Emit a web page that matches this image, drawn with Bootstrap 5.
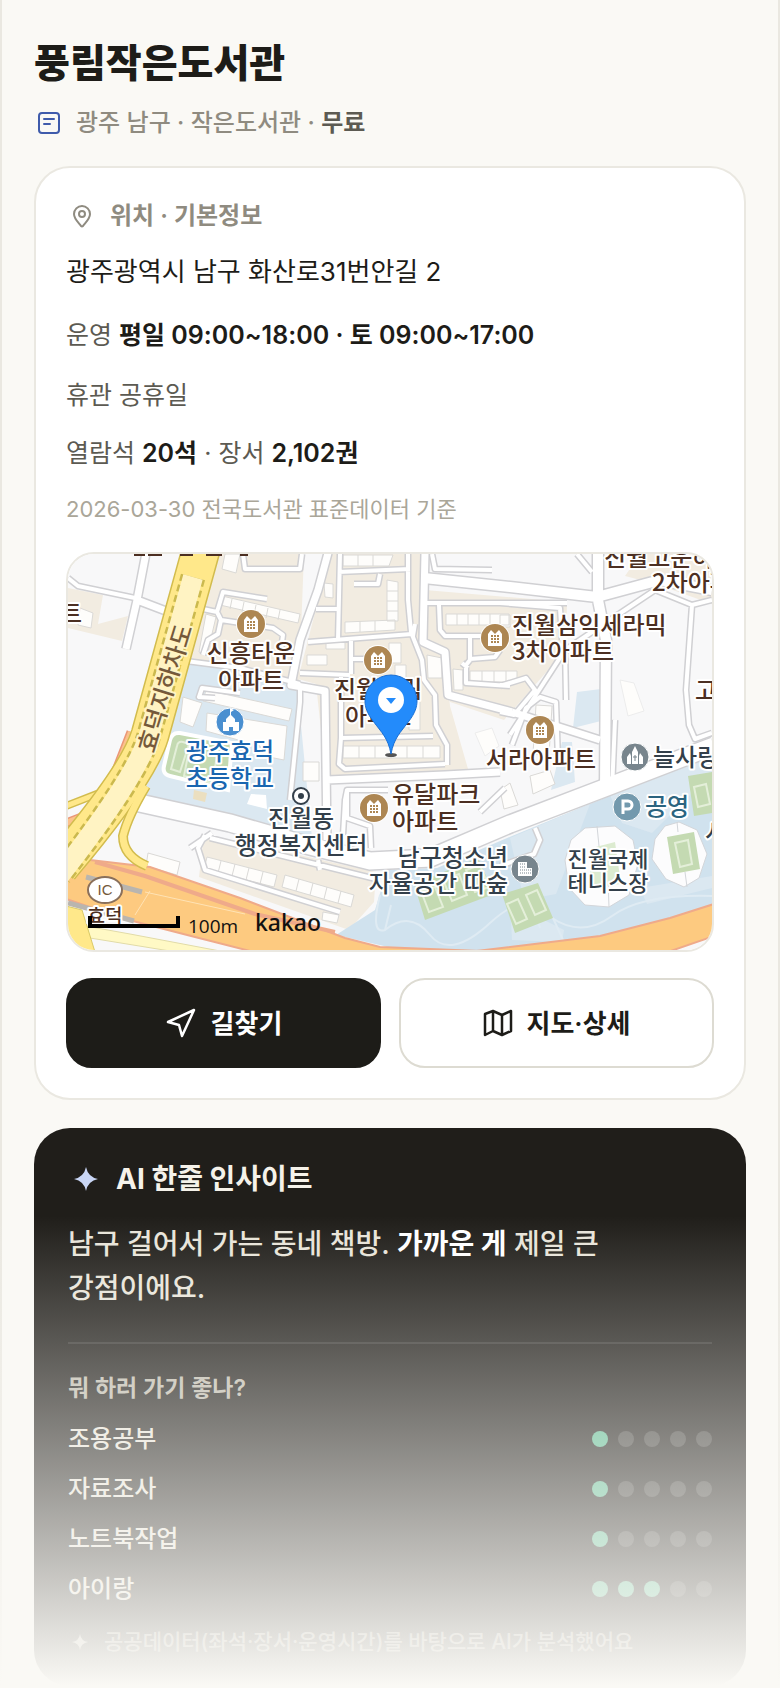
<!DOCTYPE html>
<html lang="ko">
<head>
<meta charset="utf-8">
<meta name="viewport" content="width=device-width, initial-scale=1">
<title>풍림작은도서관</title>
<link rel="stylesheet" href="https://cdn.jsdelivr.net/npm/bootstrap@5.3.0/dist/css/bootstrap.min.css">
<style>
  :root { --ink: #1d1c18; --paper: #faf9f5; --line: #eae8e1; --soft: #8f8b80; --mid: #5c5a52; }
  body { background: var(--paper); color: var(--ink); font-family: Inter, "Noto Sans CJK KR", sans-serif; font-size: 24px; line-height: 32px; }
  .shell { border: 2px solid var(--line); border-width: 0 2px; padding: 38px 32px 0; }
  .page-title { font-size: 39px; line-height: 50px; font-weight: 800; }
  .meta { color: var(--soft); font-size: 24px; line-height: 34px; font-weight: 500; margin-top: 18px; }
  .meta b { color: var(--mid); font-weight: 600; }
  .panel { border: 2px solid var(--line); border-radius: 36px; background: #fff; padding: 30px; margin-top: 26px; }
  .panel-head { color: var(--soft); font-weight: 600; line-height: 36px; }
  .facts { color: var(--mid); font-size: 25px; line-height: 34px; margin-top: 26px; }
  .facts b { color: var(--ink); font-weight: 600; }
  .address { color: var(--ink); font-size: 26px; font-weight: 400; line-height: 36px; margin: 20px 0 28px; }
  .source { color: #aaa699; font-size: 22px; line-height: 30px; margin: 24px 0 28px; }
  .map-box { border: 2px solid var(--line); border-radius: 28px; overflow: hidden; }
  .map-box svg { display: block; width: 100%; height: auto; }
  .actions { gap: 18px; margin-top: 26px; }
  .actions .btn { height: 90px; border-radius: 26px; border-width: 2px; font-size: 26px; font-weight: 600; gap: 14px; }
  .btn-go, .btn-go:hover { background: var(--ink); border-color: var(--ink); color: #fff; }
  .btn-map, .btn-map:hover { background: #fff; border-color: #dddbd2; color: var(--ink); }
  .insight { background: #201e1a; color: #e8e4d9; border-radius: 36px; padding: 34px 34px 28px; margin-top: 28px; }
  .insight h2 { color: #f5f2ea; font-size: 28px; line-height: 34px; font-weight: 700; }
  .insight .summary { font-size: 28px; line-height: 44px; font-weight: 500; margin-top: 26px; }
  .insight .summary b { color: #fff; font-weight: 700; }
  .insight hr { border-top: 2px solid #fff; opacity: .1; margin: 32px 0 28px; }
  .ask { font-size: 23px; line-height: 32px; font-weight: 600; color: #bdb9ac; margin-bottom: 10px; }
  .score { height: 50px; font-weight: 500; }
  .dots { gap: 10px; }
  .dots i { width: 16px; height: 16px; border-radius: 50%; background: rgba(255,255,255,.16); }
  .dots i.on { background: #5cba91; }
  .foot { font-size: 21px; line-height: 32px; font-weight: 500; color: #96938a; margin-top: 12px; }
  .fade-out { left: 0; right: 0; bottom: 0; height: 470px; background: linear-gradient(rgba(250,249,245,0), #faf9f5); pointer-events: none; }
  .stroke-icon { fill: none; stroke: currentColor; stroke-width: 2; stroke-linecap: round; stroke-linejoin: round; flex: none; }
  .btn .stroke-icon { stroke-width: 2.5; }
  .map-text { font-family: "Noto Sans CJK KR", sans-serif; font-size: 24px; font-weight: 500; fill: #4c2f22; stroke: #fff; stroke-width: 4; stroke-linejoin: round; paint-order: stroke; }
  .map-text .civic { fill: #333f4a; }
  .map-text .school { fill: #1a66b0; }
  .map-text .park { fill: #2b6480; }
  .map-text .tennis { fill: #333f4a; font-size: 22px; }
  .map-text .exit { font-size: 19px; }
  .map-text .tunnel { fill: #75593a; stroke: #fff3c3; }
</style>
</head>
<body>
<div class="position-relative">
<main class="shell">
  <header>
    <h1 class="page-title mb-0">풍림작은도서관</h1>
    <div class="meta d-flex align-items-center ps-1">
      <svg class="stroke-icon me-3" width="22" height="22" viewBox="0 0 22 22" style="color:#3f5bab"><rect x="1" y="1" width="20" height="20" rx="3"/><path d="M6 7h10M6 12h6"/></svg>
      <span>광주 남구 · 작은도서관 · <b>무료</b></span>
    </div>
  </header>

  <section class="panel">
    <div class="panel-head d-flex align-items-center">
      <svg class="stroke-icon ms-1 me-3" width="24" height="26" viewBox="0 0 24 26"><path d="M20 11c0 5-5 9-7 12q-1 1-2 0C9 20 4 16 4 11a8 8 0 0 1 16 0z"/><circle cx="12" cy="11" r="3"/></svg>
      <span>위치 · 기본정보</span>
    </div>
    <div class="address">광주광역시 남구 화산로31번안길 2</div>
    <div class="facts">운영 <b>평일 09:00~18:00 · 토 09:00~17:00</b></div>
    <div class="facts">휴관 공휴일</div>
    <div class="facts mt-4">열람석 <b>20석</b> · 장서 <b>2,102권</b></div>
    <div class="source">2026-03-30 전국도서관 표준데이터 기준</div>

    <div class="map-box">
    <svg viewBox="68 554 644 396" role="img" aria-label="풍림작은도서관 위치 지도">
      <defs>
        <g id="lanes" fill="none" stroke-linejoin="round">
          <path d="M68 578L78 586 135 598M217 612L223 592 267 599M203 609L217 612 221 620 273 628 283 635 281 650M221 620L218 634 208 640 203 655M186 661L240 668 300 684M300 684V702L290 800M243 554L245 569H300L302 554M340 554L338 640M338 572L410 569M354 584H378L380 574M408 554V600L411 632 422 660 424 680 435 695 436 725 447 745V765M415 624L413 636M316 609H338M308 642L412 634M351 638V674M300 673L350 675M351 659H370M341 675V738M433 736L341 738 339 764 345 769 445 764M432 554L435 569 492 570M425 603H567M439 605L440 630 445 636H482M470 637V660L466 665 466 683 510 686M470 659L495 657 500 650M462 663L468 668M577 554L592 572M712 600L692 605 686 690 689 725 695 739 712 733M500 603L560 608 562 640M565 645L566 700M512 745L526 708 540 697 556 702 558 760M500 712L514 715 535 690 526 678 500 686M655 590L565 650 510 735M655 590L692 605M343 835L345 800 347 790H388M347 790V818L370 826 371 848M240 693L202 688 199 697 215 698M205 835L198 848 205 870 340 912M210 838L380 880M318 860L320 870M500 866L534 854 540 840 535 828M505 788L480 812M615 720L612 790M190 848L212 833"/>
        </g>
        <g id="streets" fill="none" stroke-linejoin="round">
          <path d="M146 553L137 600 126 649M137 600L166 611M328 553L318 590 300 640 291 685 325 691 327 840M425 553L423 642 445 652 448 695 512 712M327 780L445 775 500 772M512 712L600 740"/>
        </g>
        <g id="avenues" fill="none" stroke-linejoin="round">
          <path d="M424 578L510 587 597 597 660 580 712 590M598 553V600L606 640 605 790"/>
        </g>
        <path id="mainroad" fill="none" d="M135 802L230 823 310 846 370 861 430 858 510 824 607 787 690 755 714 746"/>
        <g id="apt"><circle r="15" fill="#fff"/><circle r="14" fill="#ad8652"/><path d="M-7 8V-4l3-4 4 4 4-4 3 4V8z" fill="#fff"/><path d="M-4-2h8M-4 1h8M-4 4h8" stroke="#ad8652" stroke-width="2" stroke-dasharray="2 1"/></g>
      </defs>
      <rect x="68" y="554" width="644" height="396" fill="#f8f8f9"/>
      <g fill="#f2ece1">
        <path d="M68 588l35 7-5 29 30-8-6 25-54-13zM218 554h86l-5 130-112-24zM330 554h95v90l20 10 5 52 20 70-128 2-16-2-10-92-18-5zM425 590l142 12-1 48-62 70-54-18-2-50-22-9zM625 576l15-22h72v50l-56-20zM204 834l172 38-2 30-25 28-150-53z"/>
      </g>
      <path fill="#dbe8f1" d="M187 662l110 22 15 154-170-38zM577 692l24-3v32l-28 7zM562 742h10l3 40-24 8z"/>
      <path fill="#d0e2ee" d="M336 935l39-25 12-40 50-2 75-32 200-82v152l-112 32-100 14h-90z"/>
      <path fill="#dbe8f1" d="M510 838l80-34-34 90-32 6zM610 795l102-42v20l-60 60-30-10zM640 888l72-12v12l-65 16zM510 900l14 10 40 20-2 12-50-2z"/>
      <g fill="none" stroke="#dfebf3" stroke-width="2"><path d="M380 895q-10 40 5 35l6-25M385 930q25-20 45 5t60-12 50 5M552 918q30 20 60-2t100-20M553 918l10 22"/></g>
      <g fill="#c4dab2"><path d="M414 884l64-26 16 36-69 26zM502 894l36-11 15 35-38 15zM688 776l24-4v41l-18 3z"/></g>
      <g fill="none" stroke="#e4efd9" stroke-width="2"><path d="M421 891l14-4 8 20-14 5zM443 880l16-6 8 21-15 6zM466 870l14-5 9 22-14 5zM507 904l11-5 9 20-11 5zM526 895l11-5 9 20-11 5zM694 787l12-3 4 20-12 3z"/></g>

      <g stroke="#dad9d6" fill="#fefdfb">
        <path d="M80 608l13 5-2 15-13-3zM222 596l78 18-2 9-78-18zM225 554h15l-4 19-14-4zM206 614l10 3-9 38-8-3zM183 697l19 6-9 24-13-5zM206 690l86 19-3 12-86-20zM207 713l50 8 30 5-3 34-20-4-4-10-54-15zM324 583l9 1v14l-8-1zM343 555h50l-4 11h-46zM387 580l11 2v39h-11zM345 622l50-2v10l-50 3zM326 639h19v10h-19zM307 655h20v10h-20zM389 643h12v20h-12zM395 665h11v16h-11zM409 690h11v40h-11zM343 746h97v12h-97zM446 614h63v11h-63zM427 655l15 3v20h-14zM453 669l10 1v20h-9zM470 671h47v11h-47zM500 615h10v12h-10zM536 705l16 1-3 50-16-2zM148 853l32 9-3 13-31-9zM207 857l70 18-3 12-70-18zM285 875l69 20-3 12-69-20zM323 912l16 3-2 8-15-3zM303 762h16v19h-16zM500 790l10-7 8 22-14 4zM530 776l20-6 5 14-22 10z"/>
        <path d="M232 599l-2 10M244 602l-2 10M256 605l-2 10M268 608l-2 10M280 610l-2 10M358 555v11M373 555v11M387 591h11M387 601h11M387 611h11M360 621v11M375 621v11M359 746v12M375 746v12M391 746v12M407 746v12M423 746v12M457 614v11M468 614v11M479 614v11M490 614v11M482 671v11M494 671v11M506 671v11M221 861l-3 12M235 864l-3 12M249 868l-3 12M263 872l-3 12M299 879l-3 12M313 883l-3 12M327 887l-3 12M341 891l-3 12" fill="none"/>
        <path d="M475 733l17-5 7 18-14 10zM620 680l14 3 10 28-16 5z" stroke="#ececec"/>
      </g>
      <path d="M170 740q2-8 10-7l52 10-4 47-58-14q-8-2-6-10z" fill="#c4dab2" stroke="#fff" stroke-width="4"/><path d="M177 746q1-5 6-4l6 2-9 28-9-3zM190 745l28 6-6 32-28-7z" fill="none" stroke="#e4efd9" stroke-width="2"/>
      <path d="M194 790l13 3-2 9-12-3z" fill="#ebdfc0"/><path d="M251 794l15 1 1 14-20-5z" fill="#fff"/>

      <use href="#lanes" stroke="#d0d0d3" stroke-width="7"/>
      <use href="#streets" stroke="#d0d0d3" stroke-width="10"/>
      <use href="#avenues" stroke="#d0d0d3" stroke-width="13"/>
      <use href="#mainroad" stroke="#d0d0d3" stroke-width="20"/>
      <use href="#lanes" stroke="#fff" stroke-width="4"/>
      <use href="#streets" stroke="#fff" stroke-width="7"/>
      <use href="#avenues" stroke="#fff" stroke-width="10"/>
      <use href="#mainroad" stroke="#fff" stroke-width="17"/>

      <g fill="#fcfcfd" stroke="#d3d6da"><path d="M585 828l30-2 18 14 5 24-9 31-20 12-24-2-16-17-4-28 6-20zM665 826l14-4 18 8 10 24-8 24-15 9-18-8-14-20 3-20zM597 826l3 30M608 880l1 27M677 822l1 10M685 872l2 15"/></g>
      <path d="M592 848l23-6 6 42-32 4z" fill="#dcebd0"/>
      <path d="M667 837l27-5 6 37-27 5z" fill="#c4dab2"/><path d="M675 843l13-3 4 24-12 3z" fill="none" stroke="#e4efd9" stroke-width="2"/>

      <path d="M66 848l24 12 60 7 90 31 105 40 35 9 100 4H250l-55-14-70-18-59-20z" fill="#fdca80" stroke="#efaa8a" stroke-width="2"/>
      <path d="M460 953l140-17 70-18 44-14v32l-52 18z" fill="#fdca80" stroke="#efaa8a" stroke-width="2"/>
      <path d="M95 862l50 14 110 38 80 18" fill="none" stroke="#efaa8a" stroke-width="4"/><path d="M145 892l100 22M135 915l15-24" stroke="#ffe3b5" fill="none"/>
      <path d="M86 877l56 15M68 903l66 18" stroke="#b9b5af" stroke-width="5"/>
      <path d="M80 925l50 9 90 17h-50l-80-13z" fill="#fff9c5" stroke="#e1dba8"/>
      <path d="M66 906l16 4 13 42H66z" fill="#ffe88a" stroke="#d9c967"/>
      <g fill="none">
        <path d="M131 732l-18 46-21 35-26 10" stroke="#eb9778" stroke-width="9"/><path d="M131 732l-18 46-21 35-26 10" stroke="#fbc28b" stroke-width="6"/>
        <path d="M66 806l36-14 12-9" stroke="#d2bc4e" stroke-width="8"/><path d="M66 806l36-14 12-9" stroke="#ffe88a" stroke-width="5"/>
        <path d="M146 786q-18 30-23 50 0 20 24 30" stroke="#d2bc4e" stroke-width="10"/>
        <path d="M201 550L150 735Q138 775 60 867" stroke="#d2bc4e" stroke-width="39"/>
        <path d="M201 550L150 735Q138 775 60 867" stroke="#ffe88a" stroke-width="36"/>
        <path d="M146 786q-18 30-23 50 0 20 24 30" stroke="#ffe88a" stroke-width="7"/>
        <path d="M193 577L149 735Q138 775 60 875" stroke="#cbb94e" stroke-width="25" stroke-dasharray="7 4"/>
        <path d="M193 577L149 735Q138 775 60 875" stroke="#fff3c3" stroke-width="20"/>
      </g>
      <path d="M134 555h11M148 555h14M180 555h13M206 555h16M240 555h8" stroke="#4c2f22" stroke-width="2"/>

      <g class="map-text">
        <text x="251" y="662" text-anchor="middle">신흥타운</text><text x="251" y="689" text-anchor="middle">아파트</text>
        <text x="512" y="634">진월삼익세라믹</text><text x="512" y="660">3차아파트</text>
        <text x="604" y="566">진월고운하이츠</text><text x="652" y="591">2차아파트</text>
        <text x="334" y="698">진월풍림</text><text x="345" y="725">아파트</text>
        <text x="541" y="768" text-anchor="middle">서라아파트</text>
        <text x="392" y="803">유달파크</text><text x="392" y="830">아파트</text>
        <text x="60" y="622">트</text><text x="695" y="699">고</text>
        <text class="exit" x="105" y="923" text-anchor="middle">효덕</text>
        <text class="civic" x="301" y="827" text-anchor="middle">진월동</text><text class="civic" x="301" y="854" text-anchor="middle">행정복지센터</text>
        <text class="civic" x="508" y="866" text-anchor="end">남구청소년</text><text class="civic" x="508" y="892" text-anchor="end">자율공간 따숲</text>
        <text class="civic" x="653" y="766">늘사랑</text><text class="civic" x="705" y="841">시</text>
        <text class="school" x="230" y="760" text-anchor="middle">광주효덕</text><text class="school" x="230" y="787" text-anchor="middle">초등학교</text>
        <text class="park" x="645" y="815">공영</text>
        <text class="tennis" x="608" y="867" text-anchor="middle">진월국제</text><text class="tennis" x="608" y="891" text-anchor="middle">테니스장</text>
        <text class="tunnel" transform="translate(154 754) rotate(-73)">효덕지하차도</text>
      </g>
      <use href="#apt" x="251" y="624"/><use href="#apt" x="378" y="660"/><use href="#apt" x="495" y="638"/><use href="#apt" x="540" y="730"/><use href="#apt" x="374" y="808"/>
      <g stroke="#fff"><circle cx="230" cy="722" r="14" fill="#4a8fd0"/><circle cx="635" cy="757" r="14" fill="#78858d"/><circle cx="525" cy="869" r="14" fill="#78858d"/><circle cx="627" cy="807" r="14" fill="#7399ad"/></g>
      <path d="M223 731v-9h3v-3l4-4v-7l4 2-3 2v3l4 4v3h4v9h-6v-4h-4v4z" fill="#fff"/>
      <path d="M627 764v-7l3-4 1 3v8zM632 764v-12l3-6 3 6v12zM639 764v-8l1-3 3 4v7z" fill="#fff"/><path d="M635 755v6M633 757h4" stroke="#78858d"/>
      <path d="M518 876v-14h9v6h5v8z" fill="#fff"/><path d="M520 864h6M520 867h6M520 870h11M520 873h11" stroke="#78858d" stroke-dasharray="1 1"/>
      <path d="M623 814v-13h5a4 4 0 0 1 0 8h-5" fill="none" stroke="#fff" stroke-width="3"/>
      <circle cx="301" cy="796" r="8" fill="#fff" stroke="#333f4a" stroke-width="2"/><circle cx="301" cy="796" r="3" fill="#333f4a"/>
      <ellipse cx="105" cy="890" rx="17" ry="13" fill="#fff" stroke="#8a705b" stroke-width="2"/>
      <text x="105" y="895" text-anchor="middle" font-family="Liberation Sans, sans-serif" font-size="15" fill="#75593a">IC</text>
      <path d="M90 916v10h88v-10" fill="none" stroke="#000" stroke-width="4"/>
      <text x="188" y="933" font-family="Open Sans, sans-serif" font-size="19" fill="#111">100m</text>
      <text x="255" y="931" font-family="Noto Sans, sans-serif" font-size="23" font-weight="500" fill="#111">kakao</text>
      <ellipse cx="391" cy="755" rx="6" ry="2" fill="#555"/>
      <path d="M391 754c-3-16-9-21-18-33-6-8-8-14-8-20a26 26 0 0 1 52 0c0 6-2 12-8 20-9 12-15 17-18 33z" fill="#238bfb" stroke="#1a6fd4"/>
      <circle cx="391" cy="700" r="13" fill="#fff"/><path d="M386 698h10l-5 6z" fill="#238bfb"/>
    </svg>
    </div>

    <div class="actions d-flex">
      <button type="button" class="btn btn-go flex-fill w-50 d-flex align-items-center justify-content-center">
        <svg class="stroke-icon" width="32" height="32" viewBox="0 0 32 32"><path d="M29 3L17 29l-3-11L3 15z"/></svg>길찾기</button>
      <button type="button" class="btn btn-map flex-fill w-50 d-flex align-items-center justify-content-center">
        <svg class="stroke-icon" width="30" height="28" viewBox="0 0 30 28"><path d="M2 5l8-3 9 4 9-4v20l-9 4-9-4-8 4zM10 2v20M19 6v20"/></svg>지도·상세</button>
    </div>
  </section>

  <section class="insight">
    <div class="d-flex align-items-center">
      <svg class="ms-1 me-3" width="28" height="28" viewBox="0 0 28 28"><path d="M14 2q2 10 12 12-10 2-12 12Q12 16 2 14q10-2 12-12z" fill="#c9d6f5"/></svg>
      <h2 class="mb-0">AI 한줄 인사이트</h2>
    </div>
    <p class="summary mb-0">남구 걸어서 가는 동네 책방. <b>가까운 게</b> 제일 큰<br>강점이에요.</p>
    <hr>
    <div class="ask">뭐 하러 가기 좋나?</div>
    <div class="scores">
      <div class="score d-flex align-items-center justify-content-between"><span>조용공부</span><span class="dots d-flex"><i class="on"></i><i></i><i></i><i></i><i></i></span></div>
      <div class="score d-flex align-items-center justify-content-between"><span>자료조사</span><span class="dots d-flex"><i class="on"></i><i></i><i></i><i></i><i></i></span></div>
      <div class="score d-flex align-items-center justify-content-between"><span>노트북작업</span><span class="dots d-flex"><i class="on"></i><i></i><i></i><i></i><i></i></span></div>
      <div class="score d-flex align-items-center justify-content-between"><span>아이랑</span><span class="dots d-flex"><i class="on"></i><i class="on"></i><i class="on"></i><i></i><i></i></span></div>
    </div>
    <div class="foot d-flex align-items-center">
      <svg class="ms-1 me-3" width="16" height="16" viewBox="0 0 16 16"><path d="M8 0q1 7 8 8-7 1-8 8-1-7-8-8 7-1 8-8z" fill="#b5b2a8"/></svg>
      <span>공공데이터(좌석·장서·운영시간)를 바탕으로 AI가 분석했어요</span>
    </div>
  </section>
</main>
<div class="fade-out position-absolute"></div>
</div>
<script src="https://cdn.jsdelivr.net/npm/bootstrap@5.3.0/dist/js/bootstrap.bundle.min.js"></script>
</body>
</html>
